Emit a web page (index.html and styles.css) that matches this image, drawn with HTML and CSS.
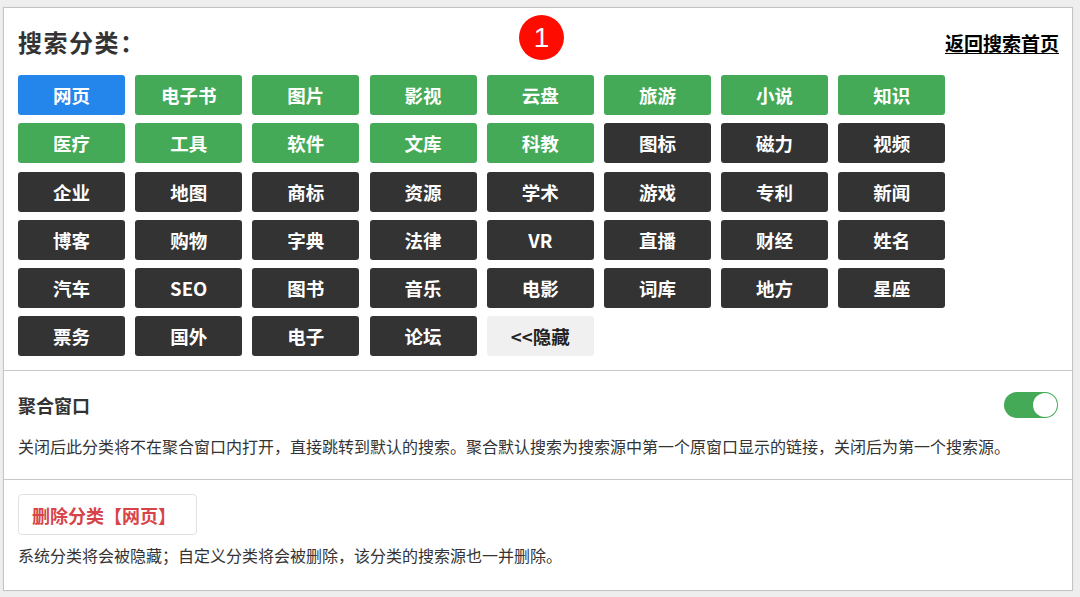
FILE: index.html
```html
<!DOCTYPE html>
<html lang="zh-CN">
<head>
<meta charset="utf-8">
<title>搜索分类</title>
<link rel="stylesheet" href="styles.css">
</head>
<body>
<div class="panel">
  <section class="sec sec-cats">
    <div class="head">
      <h2 class="title">搜索分类：</h2>
      <span class="badge">1</span>
      <a class="back" href="#">返回搜索首页</a>
    </div>
    <div class="grid">
      <span class="btn blue">网页</span>
      <span class="btn green">电子书</span>
      <span class="btn green">图片</span>
      <span class="btn green">影视</span>
      <span class="btn green">云盘</span>
      <span class="btn green">旅游</span>
      <span class="btn green">小说</span>
      <span class="btn green">知识</span>
      <span class="btn green">医疗</span>
      <span class="btn green">工具</span>
      <span class="btn green">软件</span>
      <span class="btn green">文库</span>
      <span class="btn green">科教</span>
      <span class="btn dark">图标</span>
      <span class="btn dark">磁力</span>
      <span class="btn dark">视频</span>
      <span class="btn dark">企业</span>
      <span class="btn dark">地图</span>
      <span class="btn dark">商标</span>
      <span class="btn dark">资源</span>
      <span class="btn dark">学术</span>
      <span class="btn dark">游戏</span>
      <span class="btn dark">专利</span>
      <span class="btn dark">新闻</span>
      <span class="btn dark">博客</span>
      <span class="btn dark">购物</span>
      <span class="btn dark">字典</span>
      <span class="btn dark">法律</span>
      <span class="btn dark">VR</span>
      <span class="btn dark">直播</span>
      <span class="btn dark">财经</span>
      <span class="btn dark">姓名</span>
      <span class="btn dark">汽车</span>
      <span class="btn dark">SEO</span>
      <span class="btn dark">图书</span>
      <span class="btn dark">音乐</span>
      <span class="btn dark">电影</span>
      <span class="btn dark">词库</span>
      <span class="btn dark">地方</span>
      <span class="btn dark">星座</span>
      <span class="btn dark">票务</span>
      <span class="btn dark">国外</span>
      <span class="btn dark">电子</span>
      <span class="btn dark">论坛</span>
      <span class="btn light">&lt;&lt;隐藏</span>
    </div>
  </section>
  <section class="sec sec-merge">
    <div class="row">
      <h3 class="label">聚合窗口</h3>
      <span class="toggle on"></span>
    </div>
    <p class="desc desc-merge">关闭后此分类将不在聚合窗口内打开，直接跳转到默认的搜索。聚合默认搜索为搜索源中第一个原窗口显示的链接，关闭后为第一个搜索源。</p>
  </section>
  <section class="sec sec-del">
    <span class="del">删除分类【网页】</span>
    <p class="desc desc-del">系统分类将会被隐藏；自定义分类将会被删除，该分类的搜索源也一并删除。</p>
  </section>
</div>
</body>
</html>
```

FILE: styles.css
```css
* { box-sizing: border-box; }
html, body { margin: 0; padding: 0; }
body {
  background: #eeeeee;
  font-family: "Noto Sans CJK SC", "Noto Sans", sans-serif;
  color: #333;
  width: 1080px;
  height: 597px;
  overflow: hidden;
}
.panel {
  margin: 7px 0 0 3px;
  width: 1070px;
  height: 584px;
  background: #fff;
  border: 1px solid #c4c4c4;
  box-shadow: 0 0 1px rgba(0,0,0,0.1);
}
.sec {
  padding: 0 13px 0 14px;
}
.sec-cats {
  padding-top: 9px;
  padding-bottom: 14px;
  border-bottom: 1px solid #c8c8c8;
}
.head {
  position: relative;
  height: 50px;
  display: flex;
  align-items: center;
  justify-content: space-between;
  margin-bottom: 8px;
}
.title {
  margin: 0;
  font-size: 24px;
  font-weight: 700;
  color: #333;
  line-height: 1;
  letter-spacing: 1.5px;
}
.badge {
  position: absolute;
  left: 501px;
  top: -2px;
  width: 45px;
  height: 45px;
  border-radius: 50%;
  background: #ff0c00;
  color: #fff;
  font-family: "Liberation Sans", Arial, sans-serif;
  font-size: 28px;
  line-height: 45px;
  text-align: center;
}
.back {
  color: #000;
  font-size: 19px;
  font-weight: 700;
  text-decoration: underline;
  text-underline-offset: 2px;
  line-height: 1;
  margin-top: 1px;
}
.grid {
  display: grid;
  grid-template-columns: repeat(8, 107px);
  column-gap: 10.2px;
  row-gap: 8.3px;
}
.btn {
  height: 40px;
  border-radius: 3px;
  display: flex;
  align-items: center;
  justify-content: center;
  font-size: 18.5px;
  font-weight: 700;
  color: #fff;
}
.blue { background: #2486ea; }
.green { background: #45aa57; }
.dark { background: #333333; }
.light { background: #f0f0f0; color: #222; }
.sec-merge {
  padding-top: 21px;
  padding-bottom: 21px;
  border-bottom: 1px solid #c8c8c8;
}
.row {
  height: 26px;
  display: flex;
  align-items: center;
  justify-content: space-between;
}
.label {
  margin: 0;
  font-size: 18px;
  font-weight: 700;
  color: #333;
  line-height: 1;
}
.toggle {
  position: relative;
  width: 54px;
  height: 26px;
  border-radius: 13px;
  background: #45aa57;
  margin-right: 1px;
}
.toggle::after {
  content: "";
  position: absolute;
  right: 1px;
  top: 1px;
  width: 24px;
  height: 24px;
  border-radius: 50%;
  background: #fff;
}
.desc {
  margin: 0;
  font-size: 16px;
  line-height: 24px;
  color: #333;
}
.desc-merge { margin-top: 16px; }
.sec-del {
  padding-top: 14px;
}
.del {
  display: inline-flex;
  align-items: center;
  height: 41px;
  padding: 0 20px 0 13px;
  border: 1px solid #e2e2e2;
  border-radius: 4px;
  color: #d6444a;
  font-size: 18px;
  font-weight: 700;
}
.desc-del { margin-top: 8px; }
```
